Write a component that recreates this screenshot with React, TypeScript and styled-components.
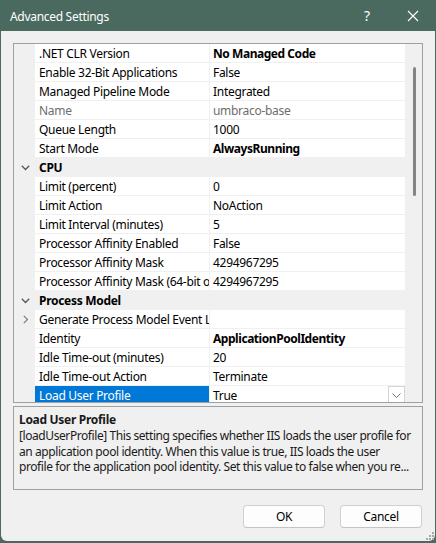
import React from "react";
import styled, { createGlobalStyle } from "styled-components";

const GlobalStyle = createGlobalStyle`
  html, body {
    margin: 0;
    padding: 0;
    background: #4a6a60;
  }
  body {
    font-family: "Noto Sans", "Open Sans", sans-serif;
    font-size: 12px;
    letter-spacing: -0.3px;
    color: #000;
  }
  * { box-sizing: border-box; }
`;

type Row = {
  name: string;
  value?: string;
  bold?: boolean;
  disabled?: boolean;
  category?: boolean;
  expandable?: boolean;
  selected?: boolean;
};

const rows: Row[] = [
  { name: ".NET CLR Version", value: "No Managed Code", bold: true },
  { name: "Enable 32-Bit Applications", value: "False" },
  { name: "Managed Pipeline Mode", value: "Integrated" },
  { name: "Name", value: "umbraco-base", disabled: true },
  { name: "Queue Length", value: "1000" },
  { name: "Start Mode", value: "AlwaysRunning", bold: true },
  { name: "CPU", category: true },
  { name: "Limit (percent)", value: "0" },
  { name: "Limit Action", value: "NoAction" },
  { name: "Limit Interval (minutes)", value: "5" },
  { name: "Processor Affinity Enabled", value: "False" },
  { name: "Processor Affinity Mask", value: "4294967295" },
  { name: "Processor Affinity Mask (64-bit option)", value: "4294967295" },
  { name: "Process Model", category: true },
  { name: "Generate Process Model Event Log Entry", value: "", expandable: true },
  { name: "Identity", value: "ApplicationPoolIdentity", bold: true },
  { name: "Idle Time-out (minutes)", value: "20" },
  { name: "Idle Time-out Action", value: "Terminate" },
  { name: "Load User Profile", value: "True", selected: true },
];

export default function App() {
  return (
    <>
      <GlobalStyle />
      <Dialog>
        <TitleBar>
          <Title>Advanced Settings</Title>
          <TitleButton>?</TitleButton>
          <TitleButton>
            <svg width="12" height="12" viewBox="0 0 12 12">
              <path d="M1 1 L11 11 M11 1 L1 11" stroke="#fff" strokeWidth="1.1" />
            </svg>
          </TitleButton>
        </TitleBar>

        <Body>
          <PropertyGrid>
            <RowList>
              {rows.map((r) =>
                r.category ? (
                  <CategoryRow key={r.name}>
                    <Gutter>
                      <Chevron dir="down" />
                    </Gutter>
                    <CategoryName>{r.name}</CategoryName>
                  </CategoryRow>
                ) : (
                  <PropRow key={r.name}>
                    <Gutter>{r.expandable && <Chevron dir="right" />}</Gutter>
                    <NameCell $selected={r.selected} $disabled={r.disabled}>
                      {r.name}
                    </NameCell>
                    <ValueCell $bold={r.bold} $disabled={r.disabled}>
                      <span>{r.value}</span>
                      {r.selected && (
                        <DropButton>
                          <svg width="9" height="5" viewBox="0 0 9 5">
                            <path d="M0.5 0.5 L4.5 4.5 L8.5 0.5" fill="none" stroke="#707070" strokeWidth="1" />
                          </svg>
                        </DropButton>
                      )}
                    </ValueCell>
                  </PropRow>
                )
              )}
            </RowList>
            <ScrollTrack>
              <ScrollThumb />
            </ScrollTrack>
          </PropertyGrid>

          <Description>
            <DescTitle>Load User Profile</DescTitle>
            <DescLine>
              [loadUserProfile] This setting specifies whether IIS loads the user profile for
            </DescLine>
            <DescLine>
              an application pool identity. When this value is true, IIS loads the user
            </DescLine>
            <DescLine>
              profile for the application pool identity. Set this value to false when you re...
            </DescLine>
          </Description>

          <ButtonRow>
            <DialogButton>OK</DialogButton>
            <DialogButton>Cancel</DialogButton>
          </ButtonRow>

          <Grip width="8" height="8" viewBox="0 0 8 8">
            <rect x="6" y="0" width="2" height="2" fill="#a8a8a8" />
            <rect x="3" y="3" width="2" height="2" fill="#a8a8a8" />
            <rect x="6" y="3" width="2" height="2" fill="#a8a8a8" />
            <rect x="0" y="6" width="2" height="2" fill="#a8a8a8" />
            <rect x="3" y="6" width="2" height="2" fill="#a8a8a8" />
            <rect x="6" y="6" width="2" height="2" fill="#a8a8a8" />
          </Grip>
        </Body>
      </Dialog>
    </>
  );
}

function Chevron({ dir }: { dir: "down" | "right" }) {
  return dir === "down" ? (
    <svg width="9" height="6" viewBox="0 0 9 6">
      <path d="M0.8 0.8 L4.5 4.5 L8.2 0.8" fill="none" stroke="#555" strokeWidth="1.3" />
    </svg>
  ) : (
    <svg width="6" height="9" viewBox="0 0 6 9">
      <path d="M0.8 0.8 L4.5 4.5 L0.8 8.2" fill="none" stroke="#777" strokeWidth="1.1" />
    </svg>
  );
}

const Dialog = styled.div`
  width: 436px;
  height: 543px;
  display: flex;
  flex-direction: column;
`;

const TitleBar = styled.div`
  height: 31px;
  display: flex;
  align-items: center;
  padding-left: 10px;
  color: #fff;
  border-radius: 8px 8px 0 0;
`;

const Title = styled.div`
  flex: 1;
  font-size: 12px;
  padding-top: 1px;
`;

const TitleButton = styled.div`
  width: 46px;
  height: 31px;
  display: flex;
  align-items: center;
  justify-content: center;
  font-size: 14px;
  color: #fff;
`;

const Body = styled.div`
  position: relative;
  flex: 1;
  margin: 0 1px 2px 1px;
  padding: 12px 12px 13px 12px;
  background: #f0f0f0;
  display: flex;
  flex-direction: column;
  border-radius: 0 0 6px 6px;
`;

const PropertyGrid = styled.div`
  height: 360px;
  border: 1px solid #a0a0a0;
  display: flex;
  background: #f0f0f0;
`;

const RowList = styled.div`
  flex: 1;
  overflow: hidden;
  background: #fff;
`;

const PropRow = styled.div`
  display: grid;
  grid-template-columns: 21px 174px 1fr;
  height: 19px;
  border-bottom: 1px solid #f0f0f0;
`;

const CategoryRow = styled.div`
  display: grid;
  grid-template-columns: 21px 1fr;
  height: 19px;
  background: #f0f0f0;
  border-bottom: 1px solid #f0f0f0;
`;

const Gutter = styled.div`
  background: #f0f0f0;
  display: flex;
  align-items: center;
  justify-content: center;
  padding-left: 2px;
  margin-bottom: -1px;
`;

const NameCell = styled.div<{ $selected?: boolean; $disabled?: boolean }>`
  padding: 1px 0 0 4px;
  line-height: 17px;
  white-space: nowrap;
  overflow: hidden;
  background: ${(p) => (p.$selected ? "#0078d7" : "transparent")};
  color: ${(p) => (p.$selected ? "#fff" : p.$disabled ? "#6d6d6d" : "#000")};
`;

const CategoryName = styled.div`
  padding: 1px 0 0 4px;
  line-height: 17px;
  font-weight: 700;
`;

const ValueCell = styled.div<{ $bold?: boolean; $disabled?: boolean }>`
  display: flex;
  align-items: center;
  justify-content: space-between;
  border-left: 1px solid #f0f0f0;
  padding-left: 3px;
  white-space: nowrap;
  overflow: hidden;
  font-weight: ${(p) => (p.$bold ? 700 : 400)};
  letter-spacing: ${(p) => (p.$bold ? "-0.45px" : "-0.3px")};
  color: ${(p) => (p.$disabled ? "#6d6d6d" : "#000")};

  & > span {
    padding-top: 2px;
    line-height: 16px;
  }
`;

const DropButton = styled.div`
  width: 17px;
  height: 18px;
  border: 1px solid #d4d4d4;
  background: #fff;
  display: flex;
  align-items: center;
  justify-content: center;
`;

const ScrollTrack = styled.div`
  width: 17px;
  padding-top: 23px;
  display: flex;
  justify-content: center;
  padding-left: 1px;
`;

const ScrollThumb = styled.div`
  width: 3px;
  height: 129px;
  border-radius: 2px;
  background: #858585;
`;

const Description = styled.div`
  margin-top: 3px;
  height: 84px;
  border: 1px solid #a0a0a0;
  padding: 4px 5px 0 5px;
  color: #1a1a1a;
`;

const DescTitle = styled.div`
  font-weight: 700;
  line-height: 17px;
`;

const DescLine = styled.div`
  line-height: 15.5px;
  white-space: nowrap;
  letter-spacing: -0.42px;
`;

const ButtonRow = styled.div`
  margin-top: 15px;
  display: flex;
  justify-content: flex-end;
  gap: 15px;
  padding-right: 1px;
`;

const DialogButton = styled.button`
  width: 82px;
  height: 23px;
  font-family: inherit;
  font-size: 12px;
  letter-spacing: -0.3px;
  color: #000;
  background: #fdfdfd;
  border: 1px solid #d0d0d0;
  border-bottom-color: #c4c4c4;
  border-radius: 4px;
  padding: 0;
`;

const Grip = styled.svg`
  position: absolute;
  right: 1px;
  bottom: 1px;
`;
